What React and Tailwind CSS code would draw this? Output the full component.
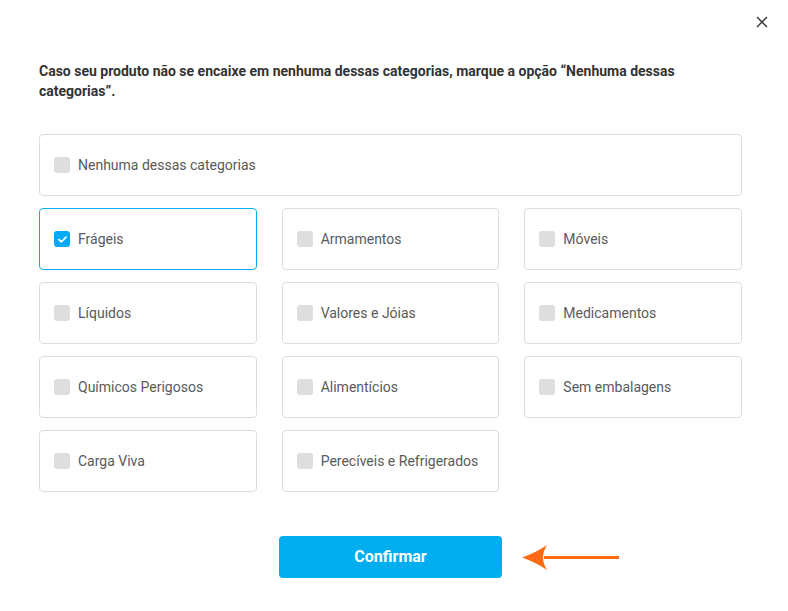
import React, { useState } from 'react';

const categories = [
  'Frágeis',
  'Armamentos',
  'Móveis',
  'Líquidos',
  'Valores e Jóias',
  'Medicamentos',
  'Químicos Perigosos',
  'Alimentícios',
  'Sem embalagens',
  'Carga Viva',
  'Perecíveis e Refrigerados',
];

const Checkbox = ({ checked }) => (
  <span
    className={`w-4 h-4 rounded-[3px] flex items-center justify-center shrink-0 ${
      checked ? 'bg-[#03a9f4]' : 'bg-[#dedede]'
    }`}
  >
    {checked && (
      <svg width="9" height="7" viewBox="0 0 9 7" fill="none">
        <path d="M1 3.6L3.3 5.8L8 1.2" stroke="white" strokeWidth="1.8" strokeLinecap="round" strokeLinejoin="round" />
      </svg>
    )}
  </span>
);

const Option = ({ label, checked, onClick }) => (
  <button
    type="button"
    onClick={onClick}
    className={`h-[62px] w-full flex items-center gap-2 px-[14px] rounded-[4px] border bg-white text-left ${
      checked ? 'border-[#0aaeef]' : 'border-[#dddddd]'
    }`}
  >
    <Checkbox checked={checked} />
    <span className="text-[14px] text-[#5a5a5a]">{label}</span>
  </button>
);

const App = () => {
  const [selected, setSelected] = useState(['Frágeis']);

  const toggle = (label) =>
    setSelected((prev) =>
      prev.includes(label) ? prev.filter((l) => l !== label) : [...prev, label]
    );

  return (
    <div className="w-[788px] h-[611px] bg-white font-['Roboto',sans-serif] relative">
      <button type="button" className="absolute right-[20px] top-[16px] text-[#333]">
        <svg width="12" height="12" viewBox="0 0 12 12" fill="none">
          <path d="M1 1L11 11M11 1L1 11" stroke="#333" strokeWidth="1.4" />
        </svg>
      </button>

      <div className="pl-[39px] pr-[46px] pt-[61px]">
        <p className="text-[14px] leading-[20px] font-bold text-[#333333] pr-[34px]">
          Caso seu produto não se encaixe em nenhuma dessas categorias, marque a opção “Nenhuma dessas
          categorias”.
        </p>

        <div className="mt-[33px]">
          <Option
            label="Nenhuma dessas categorias"
            checked={selected.includes('none')}
            onClick={() => toggle('none')}
          />
        </div>

        <div className="grid grid-cols-3 gap-x-[25px] gap-y-[12px] mt-[12px]">
          {categories.map((c) => (
            <Option key={c} label={c} checked={selected.includes(c)} onClick={() => toggle(c)} />
          ))}
        </div>

        <div className="flex justify-center mt-[44px] relative">
          <button
            type="button"
            className="w-[223px] h-[42px] rounded-[4px] bg-[#00aeef] text-white font-bold text-[16px]"
          >
            Confirmar
          </button>
          <svg
            className="absolute left-[481px] top-[8px]"
            width="100"
            height="30"
            viewBox="0 0 100 30"
            fill="none"
          >
            <path d="M24 13.5H99" stroke="#ff6a13" strokeWidth="3" />
            <path d="M2 13.5C12 10 20 6 27 1C24 6 23 10 23 13.5C23 17 24 21 27 26C20 21 12 17 2 13.5Z" fill="#ff6a13" />
          </svg>
        </div>
      </div>
    </div>
  );
};

export default App;
